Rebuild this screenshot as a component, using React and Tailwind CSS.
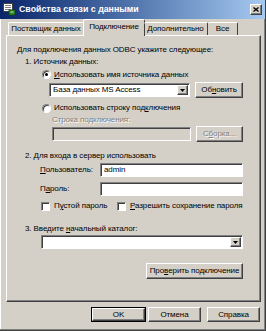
import React from "react";

const raised =
  "bg-[#d4d0c8] border border-t-white border-l-white border-r-[#404040] border-b-[#404040] shadow-[inset_-1px_-1px_#808080]";
const sunken =
  "border border-t-[#808080] border-l-[#808080] border-r-white border-b-white shadow-[inset_1px_1px_#404040]";
const disabledText = "text-[#808080] [text-shadow:1px_1px_0_#fff]";

function U({ children }) {
  return <span className="underline underline-offset-[1px] decoration-[0.5px]">{children}</span>;
}

function Radio({ checked }) {
  return (
    <div className={`w-[9px] h-[9px] shrink-0 rounded-full bg-white flex items-center justify-center ${sunken}`}>
      {checked && <div className="w-[3px] h-[3px] rounded-full bg-black" />}
    </div>
  );
}

function Checkbox() {
  return <div className={`w-[9px] h-[9px] shrink-0 bg-white ${sunken}`} />;
}

function DropArrow() {
  return (
    <div className={`w-[11px] h-full shrink-0 flex items-center justify-center ${raised}`}>
      <svg width="5" height="3" viewBox="0 0 5 3">
        <path d="M0 0h5L2.5 3z" fill="#000" />
      </svg>
    </div>
  );
}

function Btn({ children, className = "", disabled }) {
  return (
    <div
      className={`flex items-center justify-center whitespace-nowrap ${raised} ${disabled ? disabledText : ""} ${className}`}
    >
      {children}
    </div>
  );
}

function AppIcon() {
  return (
    <svg width="13" height="13" viewBox="0 0 13 13">
      <rect x="0.5" y="0.5" width="9" height="8" fill="#fff" stroke="#404040" />
      <rect x="2" y="2" width="6" height="1" fill="#808080" />
      <rect x="2" y="4" width="6" height="1" fill="#808080" />
      <rect x="2" y="6" width="6" height="1" fill="#808080" />
      <rect x="6" y="7" width="6" height="5" fill="#2e8b2e" stroke="#0a4a0a" strokeWidth="0.8" />
      <rect x="7.5" y="8.5" width="3" height="1" fill="#b8e6a0" />
    </svg>
  );
}

export default function App() {
  return (
    <div className="w-[266px] h-[331px] bg-[#d4d0c8] flex flex-col font-['Liberation_Sans',Arial,sans-serif] text-[8px] tracking-[-0.1px] text-black leading-none whitespace-nowrap border-r border-b border-r-[#404040] border-b-[#404040] shadow-[inset_-1px_-1px_#808080,inset_1px_0_#fff] overflow-hidden select-none">
      {/* title bar */}
      <div className="h-[19px] flex items-center pl-[3px] pr-[3px] bg-linear-to-r from-[#0a246a] to-[#a6caf0]">
        <AppIcon />
        <span className="ml-[3px] text-white font-bold text-[8.8px] tracking-normal">Свойства связи с данными</span>
        <div className={`ml-auto w-[12px] h-[11px] flex items-center justify-center ${raised}`}>
          <svg width="6" height="5" viewBox="0 0 6 5">
            <path d="M0.5 0.5l5 4M5.5 0.5l-5 4" stroke="#000" strokeWidth="1.3" />
          </svg>
        </div>
      </div>

      {/* tabs */}
      <div className="h-[16px] flex items-end pl-[8px] relative z-10">
        <div className="w-[76px] h-[13px] flex items-center justify-center rounded-t-[2px] border-t border-l border-r border-t-white border-l-white border-r-[#404040]">
          Поставщик данных
        </div>
        <div className="w-[62px] h-[17px] -mb-[1px] -mx-[1px] pb-[3px] flex items-center justify-center bg-[#d4d0c8] rounded-t-[2px] border-t border-l border-r border-t-white border-l-white border-r-[#404040]">
          Подключение
        </div>
        <div className="w-[64px] h-[13px] flex items-center justify-center rounded-t-[2px] border-t border-r border-t-white border-r-[#404040]">
          Дополнительно
        </div>
        <div className="w-[30px] h-[13px] flex items-center justify-center rounded-t-[2px] border-t border-r border-t-white border-r-[#404040]">
          Все
        </div>
      </div>

      {/* panel */}
      <div className="ml-[6px] w-[255px] h-[267px] flex flex-col border border-t-white border-l-white border-r-[#404040] border-b-[#404040] shadow-[inset_-1px_-1px_#808080]">
        <div className="mt-[8px] h-[11px] pl-[10px] flex items-center">
          Для подключения данных ODBC укажите следующее:
        </div>
        <div className="mt-[1px] h-[11px] pl-[18px] flex items-center">1. Источник данных:</div>
        <div className="mt-[2px] h-[11px] pl-[35px] flex items-center gap-[3px]">
          <Radio checked />
          <span>
            <U>И</U>спользовать имя источника данных
          </span>
        </div>
        <div className="mt-[2px] h-[16px] pl-[42px] flex items-center">
          <div className={`w-[141px] h-[14px] bg-white flex items-center p-[1px] ${sunken}`}>
            <span className="flex-1 pl-[2px]">База данных MS Access</span>
            <DropArrow />
          </div>
          <Btn className="ml-[5px] w-[48px] h-[16px]">
            Об<U>н</U>овить
          </Btn>
        </div>
        <div className="mt-[4px] h-[12px] pl-[35px] flex items-center gap-[3px]">
          <Radio />
          <span>
            Использовать строку под<U>к</U>лючения
          </span>
        </div>
        <div className={`mt-0 h-[11px] pl-[45px] flex items-center ${disabledText}`}>
          Строка подключения:
        </div>
        <div className="mt-[1px] h-[16px] pl-[45px] flex items-center">
          <div className={`w-[139px] h-[14px] bg-[#d4d0c8] ${sunken}`} />
          <Btn disabled className="ml-[5px] w-[47px] h-[16px]">
            С<U>б</U>орка...
          </Btn>
        </div>
        <div className="mt-[8px] h-[11px] pl-[18px] flex items-center">
          2. Для входа в сервер использовать
        </div>
        <div className="mt-[2px] h-[14px] pl-[33px] flex items-center">
          <span className="w-[60px]">
            <U>П</U>ользователь:
          </span>
          <div className={`w-[143px] h-[14px] bg-white flex items-center pl-[3px] ${sunken}`}>admin</div>
        </div>
        <div className="mt-[5px] h-[14px] pl-[33px] flex items-center">
          <span className="w-[60px]">
            П<U>а</U>роль:
          </span>
          <div className={`w-[143px] h-[14px] bg-white ${sunken}`} />
        </div>
        <div className="mt-[5px] h-[10px] pl-[34px] flex items-center">
          <Checkbox />
          <span className="ml-[4px] w-[63px]">
            П<U>у</U>стой пароль
          </span>
          <Checkbox />
          <span className="ml-[4px]">
            <U>Р</U>азрешить сохранение пароля
          </span>
        </div>
        <div className="mt-[12px] h-[11px] pl-[18px] flex items-center">
          <span>3. Введите&nbsp;</span>
          <span>
            <U>н</U>ачальный каталог:
          </span>
        </div>
        <div className="mt-[1px] h-[14px] pl-[34px] flex items-center">
          <div className={`w-[202px] h-[14px] bg-white flex items-center justify-end p-[1px] ${sunken}`}>
            <DropArrow />
          </div>
        </div>
        <div className="mt-[14px] h-[16px] pl-[139px] flex items-center">
          <Btn className="w-[97px] h-[16px]">
            Про<U>в</U>ерить подключение
          </Btn>
        </div>
      </div>

      {/* bottom buttons */}
      <div className="mt-[5px] h-[15px] flex items-center pl-[91px]">
        <div className="w-[55px] h-[15px] border border-black">
          <Btn className="w-full h-full">OK</Btn>
        </div>
        <Btn className="ml-[2px] w-[53px] h-[15px]">Отмена</Btn>
        <Btn className="ml-[6px] w-[53px] h-[15px]">Справка</Btn>
      </div>
    </div>
  );
}
